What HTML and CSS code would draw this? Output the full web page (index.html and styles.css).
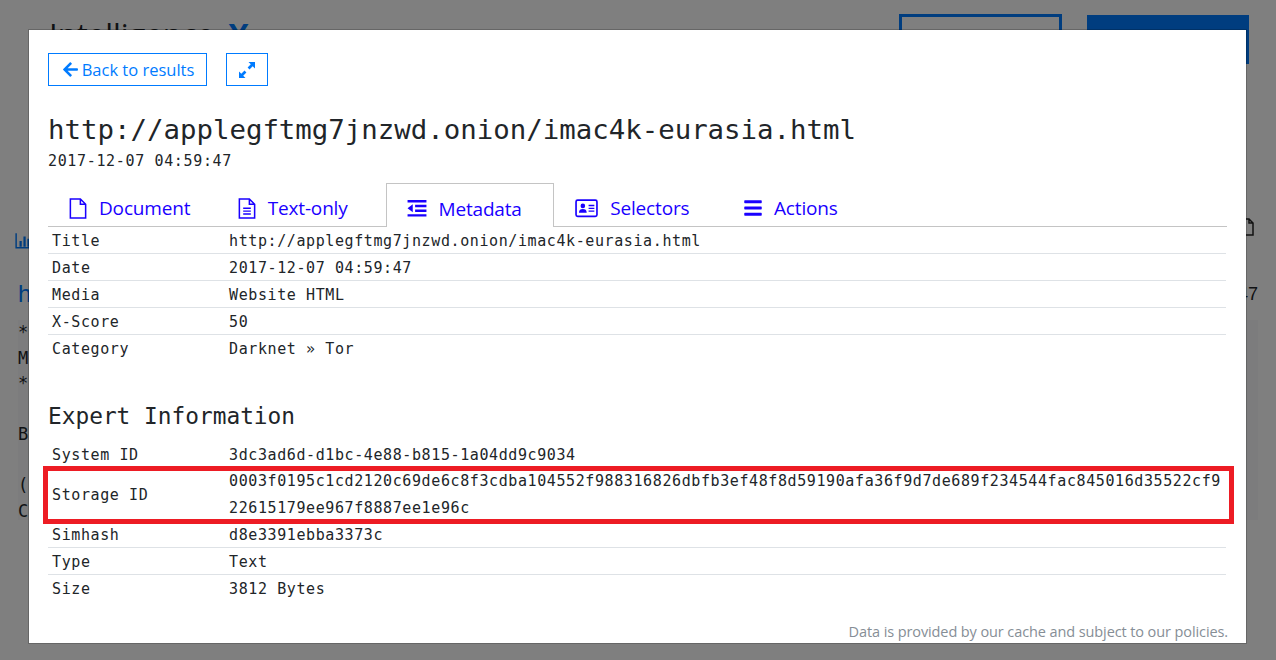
FILE: index.html
```html
<!DOCTYPE html>
<html lang="en">
<head>
<meta charset="utf-8">
<title>Intelligence X</title>
<link rel="stylesheet" href="styles.css">
</head>
<body>
<div class="page">
  <header class="site-header">
    <div class="brand">Intelligence <span class="brand-x">X</span></div>
    <div class="header-actions">
      <span class="hdr-btn hdr-outline"></span>
      <span class="hdr-btn hdr-solid"></span>
    </div>
  </header>
  <div class="tools">
    <svg class="tool-chart" viewBox="0 0 16 16"><path d="M1 1v13h14" fill="none" stroke="#007bff" stroke-width="1.3"/><path d="M4 8h2v5H4zM7.500 4h2v9h-2zM11 6h2v7h-2z" fill="#007bff"/></svg>
    <svg class="tool-file" viewBox="0 0 14 18"><path d="M1 1h8l4 4v12H1z M9 1v4h4" fill="none" stroke="#222" stroke-width="1.5"/></svg>
  </div>
  <div class="result-head"><span class="result-link">http</span><span class="result-date">2017-12-07 04:59:47</span></div>
  <pre class="result-body">***
Message
***

Buy

(
Click</pre>
</div>

<div class="backdrop"></div>

<main class="modal">
  <div class="modal-actions">
    <a class="btn btn-back"><svg class="ico-arrow" viewBox="0 0 448 512"><path d="M257.500 445.100l-22.200 22.200c-9.400 9.400-24.600 9.400-33.900 0L7 273c-9.400-9.400-9.400-24.600 0-33.900L201.400 44.700c9.400-9.400 24.600-9.400 33.900 0l22.200 22.200c9.500 9.500 9.300 25-.4 34.300L136.600 216H424c13.300 0 24 10.700 24 24v32c0 13.300-10.700 24-24 24H136.600l120.500 114.800c9.800 9.300 10 24.800.4 34.300z"/></svg>Back to results</a>
    <a class="btn btn-expand"><svg class="ico-expand" viewBox="0 0 16 16"><path d="M9.500 0H16v6.500l-2.300-2.300-3.200 3.200-1.900-1.900 3.200-3.200zM6.500 16H0V9.500l2.300 2.300 3.200-3.200 1.900 1.900-3.200 3.200z"/></svg></a>
  </div>

  <h1 class="doc-title">http://applegftmg7jnzwd.onion/imac4k-eurasia.html</h1>
  <div class="doc-date">2017-12-07 04:59:47</div>

  <nav class="tabs">
    <a class="tab">
      <svg class="ico ico-file" viewBox="0 0 18 22"><path d="M1 1h10.500L17 6.500V21H1z M11.500 1v5.500H17" fill="none" stroke="currentColor" stroke-width="1.600"/></svg>
      Document
    </a>
    <a class="tab">
      <svg class="ico ico-file" viewBox="0 0 18 22"><path d="M1 1h10.500L17 6.500V21H1z M11.500 1v5.500H17" fill="none" stroke="currentColor" stroke-width="1.600"/><path d="M5 10h8v1.500H5zM5 13h8v1.500H5zM5 16h8v1.500H5z" fill="currentColor"/></svg>
      Text-only
    </a>
    <a class="tab tab-active">
      <svg class="ico ico-outdent" viewBox="0 0 20 18"><path d="M0 0h20v2.600H0zM8 5h12v2.600H8zM8 10h12v2.600H8zM0 15h20v2.600H0zM5.500 4.500v8.500L0 8.800z" fill="currentColor"/></svg>
      Metadata
    </a>
    <a class="tab">
      <svg class="ico ico-card" viewBox="0 0 22 18"><rect x="1" y="1" width="20" height="15.500" rx="1.500" fill="none" stroke="currentColor" stroke-width="1.600"/><circle cx="7.500" cy="6.500" r="2.200" fill="currentColor"/><path d="M3.800 13c0-2.500 1.500-3.500 3.700-3.500s3.700 1 3.700 3.500zM13 5.500h5.500v1.300H13zM13 8.200h5.500v1.300H13zM13 10.900h5.500v1.300H13z" fill="currentColor"/></svg>
      Selectors
    </a>
    <a class="tab">
      <svg class="ico ico-bars" viewBox="0 0 448 512"><path d="M16 132h416c8.837 0 16-7.163 16-16V76c0-8.837-7.163-16-16-16H16C7.163 60 0 67.163 0 76v40c0 8.837 7.163 16 16 16zm0 160h416c8.837 0 16-7.163 16-16v-40c0-8.837-7.163-16-16-16H16c-8.837 0-16 7.163-16 16v40c0 8.837 7.163 16 16 16zm0 160h416c8.837 0 16-7.163 16-16v-40c0-8.837-7.163-16-16-16H16c-8.837 0-16 7.163-16 16v40c0 8.837 7.163 16 16 16z" fill="currentColor"/></svg>
      Actions
    </a>
  </nav>

  <section class="meta">
    <div class="row"><div class="cell-k">Title</div><div class="cell-v">http://applegftmg7jnzwd.onion/imac4k-eurasia.html</div></div>
    <div class="row"><div class="cell-k">Date</div><div class="cell-v">2017-12-07 04:59:47</div></div>
    <div class="row"><div class="cell-k">Media</div><div class="cell-v">Website HTML</div></div>
    <div class="row"><div class="cell-k">X-Score</div><div class="cell-v">50</div></div>
    <div class="row row-last"><div class="cell-k">Category</div><div class="cell-v">Darknet » Tor</div></div>
  </section>

  <h2 class="section-title">Expert Information</h2>

  <section class="meta">
    <div class="row"><div class="cell-k">System ID</div><div class="cell-v">3dc3ad6d-d1bc-4e88-b815-1a04dd9c9034</div></div>
    <div class="row row-storage"><div class="cell-k">Storage ID</div><div class="cell-v">0003f0195c1cd2120c69de6c8f3cdba104552f988316826dbfb3ef48f8d59190afa36f9d7de689f234544fac845016d35522cf922615179ee967f8887ee1e96c</div><div class="highlight"></div></div>
    <div class="row"><div class="cell-k">Simhash</div><div class="cell-v">d8e3391ebba3373c</div></div>
    <div class="row"><div class="cell-k">Type</div><div class="cell-v">Text</div></div>
    <div class="row row-last"><div class="cell-k">Size</div><div class="cell-v">3812 Bytes</div></div>
  </section>

  <p class="note">Data is provided by our cache and subject to our policies.</p>
</main>
</body>
</html>
```

FILE: styles.css
```css
* { box-sizing: border-box; }

html, body {
  margin: 0;
  height: 660px;
  overflow: hidden;
  background: #fff;
}

/* page behind the dialog */
.page {
  height: 660px;
  overflow: hidden;
  font-family: "Liberation Sans", sans-serif;
  color: #212529;
}

.site-header {
  display: flex;
  justify-content: space-between;
  height: 226px;
  padding: 14px 27px 0 49px;
}

.brand {
  font-family: "Open Sans", sans-serif;
  font-size: 31px;
  line-height: 40px;
}

.brand-x {
  color: #007bff;
  font-weight: 700;
  margin-left: 6px;
}

.header-actions {
  display: flex;
  gap: 25px;
}

.hdr-btn {
  display: block;
  height: 49px;
}

.hdr-outline { width: 163px; border: 3px solid #007bff; }
.hdr-solid { width: 162px; background: #007bff; margin-top: 1px; }

.tools {
  display: flex;
  justify-content: space-between;
  align-items: center;
  height: 30px;
  padding: 0 22px 0 15px;
}

.tool-chart { width: 18px; height: 18px; }
.tool-file { width: 14px; height: 20px; align-self: flex-start; margin-top: -9px; }

.result-head {
  display: flex;
  justify-content: space-between;
  height: 64px;
  padding: 24px 18px 0;
  font-size: 18px;
  line-height: 28px;
}

.result-link { color: #007bff; font-size: 24px; }

.result-body {
  margin: 0 18px;
  height: 200px;
  padding: 0;
  background: #f8f9fa;
  font-family: "DejaVu Sans Mono", monospace;
  font-size: 17px;
  line-height: 25.500px;
  color: #212529;
}

.backdrop {
  position: fixed;
  inset: 0;
  background: rgba(0, 0, 0, .5);
}

/* dialog */
.modal {
  position: fixed;
  left: 28px;
  top: 29px;
  width: 1219px;
  height: 615px;
  padding: 23px 19px 0 19px;
  background: #fff;
  border: 1px solid rgba(0, 0, 0, .2);
  background-clip: padding-box;
  color: #212529;
  font-family: "DejaVu Sans Mono", monospace;
}

.modal-actions {
  display: flex;
  gap: 19px;
  height: 33px;
}

.btn {
  display: flex;
  align-items: center;
  justify-content: center;
  height: 33px;
  border: 1px solid #007bff;
  color: #007bff;
  font-family: "Open Sans", sans-serif;
  font-size: 16.500px;
}

.btn-back { width: 159px; padding-left: 2px; }
.btn-expand { width: 42px; }

.ico-arrow {
  width: 15px;
  height: 17px;
  margin-right: 4px;
  fill: #007bff;
}

.ico-expand {
  width: 16px;
  height: 16px;
  fill: #007bff;
}

.doc-title {
  margin: 26px 0 0;
  height: 36px;
  font-size: 27.400px;
  line-height: 36px;
  font-weight: 400;
}

.doc-date {
  height: 34px;
  margin-top: 2px;
  font-size: 15px;
  line-height: 22px;
  letter-spacing: .65px;
}

.tabs {
  display: grid;
  grid-template-columns: repeat(5, 168.750px);
  height: 44px;
  margin-top: -1px;
  border-bottom: 1px solid #c4c4c4;
}

.tab {
  display: flex;
  align-items: center;
  gap: 12px;
  height: 44px;
  padding: 6px 0 0 21px;
  color: #1a00ff;
  font-family: "Open Sans", sans-serif;
  font-size: 19px;
  letter-spacing: -.17px;
}

.tab-active {
  background: #fff;
  border: 1px solid #c4c4c4;
  border-bottom: 0;
  padding-left: 20px;
  width: 168px;
}

.ico { flex: none; fill: none; }
.ico-file { width: 18px; height: 21px; }
.ico-outdent { width: 20px; height: 17px; }
.ico-card { width: 23px; height: 19px; }
.ico-bars { width: 18px; height: 20px; }

.meta {
  width: 1178px;
  font-size: 15px;
}

.row {
  position: relative;
  display: grid;
  grid-template-columns: 177px 1fr;
  border-bottom: 1px solid #dee2e6;
  letter-spacing: .6px;
}

.row-last { border-bottom-color: transparent; }

.cell-k { padding: 2px 0 0 4px; align-self: center; line-height: 24px; }
.cell-v { padding: 2px 0 0 4px; overflow-wrap: anywhere; line-height: 24px; }
.row-storage { height: 53px; }
.row-storage .cell-k { padding-top: 0; }
.row-storage .cell-v { padding-top: 0; line-height: 27px; }

.highlight {
  position: absolute;
  left: -5px;
  right: -8px;
  top: -2px;
  bottom: -4px;
  border: 5px solid #ed1c24;
}

.section-title {
  margin: 0;
  height: 79px;
  padding-top: 39px;
  font-size: 22.800px;
  line-height: 30px;
  font-weight: 400;
}

.note {
  position: absolute;
  right: 18px;
  bottom: 1px;
  margin: 0;
  font-family: "Open Sans", sans-serif;
  font-size: 14.500px;
  line-height: 20px;
  letter-spacing: -.1px;
  color: #868e96;
}
```
